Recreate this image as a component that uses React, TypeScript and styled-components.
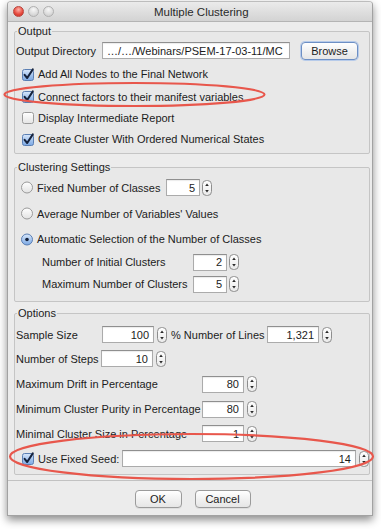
import React from 'react';
import styled, { createGlobalStyle } from 'styled-components';

const GlobalStyle = createGlobalStyle`
  html, body {
    margin: 0;
    padding: 0;
    background: #ffffff;
  }
  body {
    font-family: "Liberation Sans", Arial, sans-serif;
    font-size: 11px;
    color: #1c1c1c;
  }
`;

const Stage = styled.div`
  position: relative;
  width: 381px;
  height: 529px;
  padding: 1px 0 0 7px;
  box-sizing: border-box;
`;

const Window = styled.div`
  width: 366px;
  height: 515px;
  display: flex;
  flex-direction: column;
  background: #ececec;
  border: 1px solid #a2a2a2;
  border-top-color: #bdbdbd;
  border-radius: 4px 4px 0 0;
  box-shadow: 0 4px 9px rgba(0, 0, 0, 0.45);
  box-sizing: border-box;
  overflow: hidden;
`;

const TitleBar = styled.div`
  height: 20px;
  flex: none;
  display: flex;
  align-items: center;
  padding-left: 5px;
  background: linear-gradient(#ebebeb, #d3d3d3);
  border-bottom: 1px solid #b4b4b4;
  box-sizing: border-box;
`;

const Lights = styled.div`
  display: flex;
  gap: 4px;
  width: 140px;
`;

const Light = styled.span<{ $red?: boolean }>`
  width: 11px;
  height: 11px;
  border-radius: 50%;
  box-sizing: border-box;
  border: 1px solid ${(p) => (p.$red ? '#b8443c' : '#b0b0b0')};
  background: ${(p) =>
    p.$red
      ? 'radial-gradient(circle at 50% 30%, #ffb1a8, #e5473b 60%, #c8342a)'
      : 'radial-gradient(circle at 50% 30%, #f7f7f7, #d8d8d8 65%, #c6c6c6)'};
`;

const Title = styled.div`
  font-size: 11.5px;
  color: #2a2a2a;
  margin-left: 1px;
`;

const Panel = styled.div`
  flex: none;
  height: 459px;
  padding: 3px 2px 0 6px;
  border-bottom: 1px solid #c2c2c2;
  box-sizing: border-box;
  display: flex;
  flex-direction: column;
`;

const Group = styled.fieldset<{ $pt: number; $pb: number; $mt: number }>`
  margin: ${(p) => p.$mt}px 0 0;
  padding: ${(p) => p.$pt}px 0 ${(p) => p.$pb}px 1px;
  border: 1px solid #c5c5c5;
  border-radius: 2px;
  background: #e8e8e8;
  min-width: 0;
`;

const Legend = styled.legend`
  padding: 0 1px;
  margin-left: 1px;
  line-height: 13px;
  font-size: 11px;
  color: #1c1c1c;
`;

const Row = styled.div<{ $h: number; $indent?: number }>`
  height: ${(p) => p.$h}px;
  display: flex;
  align-items: center;
  padding-left: ${(p) => p.$indent ?? 0}px;
  white-space: nowrap;
`;

const Label = styled.span<{ $w?: number; $ml?: number }>`
  width: ${(p) => (p.$w ? `${p.$w}px` : 'auto')};
  margin-left: ${(p) => p.$ml ?? 0}px;
  flex: none;
`;

const Gap = styled.span<{ $w: number }>`
  width: ${(p) => p.$w}px;
  flex: none;
`;

const Field = styled.div<{ $w: number; $left?: boolean }>`
  width: ${(p) => p.$w}px;
  height: 17px;
  flex: none;
  box-sizing: border-box;
  background: #ffffff;
  border: 1px solid #ababab;
  border-top-color: #8f8f8f;
  box-shadow: inset 0 1px 1px rgba(0, 0, 0, 0.08);
  display: flex;
  align-items: center;
  justify-content: ${(p) => (p.$left ? 'flex-start' : 'flex-end')};
  padding: 0 4px;
  font-size: 11px;
  overflow: hidden;
`;

const SpinWrap = styled.span<{ $gap?: number }>`
  display: inline-flex;
  margin-left: ${(p) => p.$gap ?? 2}px;
  flex: none;
`;

const Spinner = ({ gap }: { gap?: number }) => (
  <SpinWrap $gap={gap}>
    <svg width="10" height="16" viewBox="0 0 10 16">
      <defs>
        <linearGradient id="spg" x1="0" y1="0" x2="0" y2="1">
          <stop offset="0" stopColor="#ffffff" />
          <stop offset="1" stopColor="#e9e9e9" />
        </linearGradient>
      </defs>
      <rect x="0.5" y="0.5" width="9" height="15" rx="4" fill="url(#spg)" stroke="#8e8e8e" />
      <path d="M3.2 6 L5 3.6 L6.8 6 Z" fill="#2b2b2b" />
      <path d="M3.2 10 L5 12.4 L6.8 10 Z" fill="#2b2b2b" />
    </svg>
  </SpinWrap>
);

const CheckWrap = styled.span`
  display: inline-flex;
  width: 12px;
  height: 13px;
  margin-right: 4px;
  flex: none;
`;

const Check = ({ on }: { on?: boolean }) => (
  <CheckWrap>
    <svg width="14" height="14" viewBox="0 0 14 14" style={{ overflow: 'visible' }}>
      <defs>
        <linearGradient id="cbon" x1="0" y1="0" x2="0" y2="1">
          <stop offset="0" stopColor="#d9e8fb" />
          <stop offset="0.5" stopColor="#a7c6ef" />
          <stop offset="1" stopColor="#7aa7e3" />
        </linearGradient>
        <linearGradient id="cboff" x1="0" y1="0" x2="0" y2="1">
          <stop offset="0" stopColor="#ffffff" />
          <stop offset="1" stopColor="#e4e4e4" />
        </linearGradient>
      </defs>
      <rect
        x="0.5"
        y="1.5"
        width="11"
        height="11"
        rx="2"
        fill={on ? 'url(#cbon)' : 'url(#cboff)'}
        stroke={on ? '#5b7fb3' : '#9a9a9a'}
      />
      {on ? (
        <path
          d="M2.6 6.8 L5.2 10 L10.8 1.4"
          fill="none"
          stroke="#16233d"
          strokeWidth="2"
          strokeLinecap="round"
          strokeLinejoin="round"
        />
      ) : null}
    </svg>
  </CheckWrap>
);

const Radio = ({ on }: { on?: boolean }) => (
  <CheckWrap>
    <svg width="12" height="13" viewBox="0 0 12 13">
      <defs>
        <linearGradient id="rbon" x1="0" y1="0" x2="0" y2="1">
          <stop offset="0" stopColor="#d9e8fb" />
          <stop offset="1" stopColor="#7aa7e3" />
        </linearGradient>
        <linearGradient id="rboff" x1="0" y1="0" x2="0" y2="1">
          <stop offset="0" stopColor="#ffffff" />
          <stop offset="1" stopColor="#e2e2e2" />
        </linearGradient>
      </defs>
      <circle
        cx="6"
        cy="6.5"
        r="5.5"
        fill={on ? 'url(#rbon)' : 'url(#rboff)'}
        stroke={on ? '#5b7fb3' : '#9a9a9a'}
      />
      {on ? <circle cx="6" cy="6.5" r="1.8" fill="#16233d" /> : null}
    </svg>
  </CheckWrap>
);

const Button = styled.button<{ $w: number; $focus?: boolean }>`
  width: ${(p) => p.$w}px;
  height: 18px;
  flex: none;
  padding: 0;
  box-sizing: border-box;
  font-family: "Liberation Sans", Arial, sans-serif;
  font-size: 11px;
  color: #1c1c1c;
  border-radius: 4px;
  border: 1px solid ${(p) => (p.$focus ? '#6d8fc4' : '#9b9b9b')};
  box-shadow: ${(p) => (p.$focus ? '0 0 0 1px #b7cbea' : '0 1px 0 rgba(0,0,0,0.06)')};
  background: linear-gradient(#ffffff, #f0f0f0 55%, #e6e6e6);
`;

const Footer = styled.div`
  flex: 1;
  display: flex;
  justify-content: center;
  align-items: center;
  gap: 13px;
  padding: 1px 0 0 5px;
`;

const Annotations = styled.svg`
  position: absolute;
  left: 0;
  top: 0;
  pointer-events: none;
`;

export default function App() {
  return (
    <>
      <GlobalStyle />
      <Stage>
        <Window>
          <TitleBar>
            <Lights>
              <Light $red />
              <Light />
              <Light />
            </Lights>
            <Title>Multiple Clustering</Title>
          </TitleBar>
          <Panel>
            <Group $mt={0} $pt={1} $pb={3}>
              <Legend>Output</Legend>
              <Row $h={23}>
                <Label $w={86}>Output Directory</Label>
                <Field $w={188} $left>
                  …/…/Webinars/PSEM-17-03-11/MC
                </Field>
                <Gap $w={11} />
                <Button $w={57} $focus>
                  Browse
                </Button>
              </Row>
              <Row $h={24} $indent={6}>
                <Check on />
                Add All Nodes to the Final Network
              </Row>
              <Row $h={21} $indent={6}>
                <Check on />
                Connect factors to their manifest variables
              </Row>
              <Row $h={21} $indent={6}>
                <Check />
                Display Intermediate Report
              </Row>
              <Row $h={22} $indent={6}>
                <Check on />
                Create Cluster With Ordered Numerical States
              </Row>
            </Group>

            <Group $mt={7} $pt={1} $pb={6}>
              <Legend>Clustering Settings</Legend>
              <Row $h={25} $indent={5}>
                <Radio />
                <Label $w={129}>Fixed Number of Classes</Label>
                <Field $w={34}>5</Field>
                <Spinner />
              </Row>
              <Row $h={27} $indent={5}>
                <Radio />
                Average Number of Variables' Values
              </Row>
              <Row $h={24} $indent={5}>
                <Radio on />
                Automatic Selection of the Number of Classes
              </Row>
              <Row $h={22} $indent={26}>
                <Label $w={151}>Number of Initial Clusters</Label>
                <Field $w={34}>2</Field>
                <Spinner />
              </Row>
              <Row $h={22} $indent={26}>
                <Label $w={151}>Maximum Number of Clusters</Label>
                <Field $w={34}>5</Field>
                <Spinner />
              </Row>
            </Group>

            <Group $mt={5} $pt={3} $pb={3}>
              <Legend>Options</Legend>
              <Row $h={23}>
                <Label $w={86}>Sample Size</Label>
                <Field $w={52}>100</Field>
                <Spinner gap={3} />
                <Label $w={96} $ml={4}>
                  % Number of Lines
                </Label>
                <Field $w={52}>1,321</Field>
                <Spinner gap={3} />
              </Row>
              <Row $h={25}>
                <Label $w={85}>Number of Steps</Label>
                <Field $w={52}>10</Field>
                <Spinner gap={3} />
              </Row>
              <Row $h={26}>
                <Label $w={186}>Maximum Drift in Percentage</Label>
                <Field $w={42}>80</Field>
                <Spinner gap={3} />
              </Row>
              <Row $h={24}>
                <Label $w={186}>Minimum Cluster Purity in Percentage</Label>
                <Field $w={42}>80</Field>
                <Spinner gap={3} />
              </Row>
              <Row $h={25}>
                <Label $w={186}>Minimal Cluster Size in Percentage</Label>
                <Field $w={42}>1</Field>
                <Spinner gap={3} />
              </Row>
              <Row $h={25} $indent={6}>
                <Check on />
                <Label $w={84}>Use Fixed Seed:</Label>
                <Field $w={234}>14</Field>
                <Spinner gap={3} />
              </Row>
            </Group>
          </Panel>
          <Footer>
            <Button $w={47}>OK</Button>
            <Button $w={56}>Cancel</Button>
          </Footer>
        </Window>
        <Annotations width="381" height="529" viewBox="0 0 381 529">
          <ellipse cx="134.5" cy="94.5" rx="130" ry="11.5" fill="none" stroke="#e8574c" strokeWidth="2.2" />
          <ellipse cx="191.5" cy="456.5" rx="181.5" ry="22.5" fill="none" stroke="#e8574c" strokeWidth="2.2" />
        </Annotations>
      </Stage>
    </>
  );
}
